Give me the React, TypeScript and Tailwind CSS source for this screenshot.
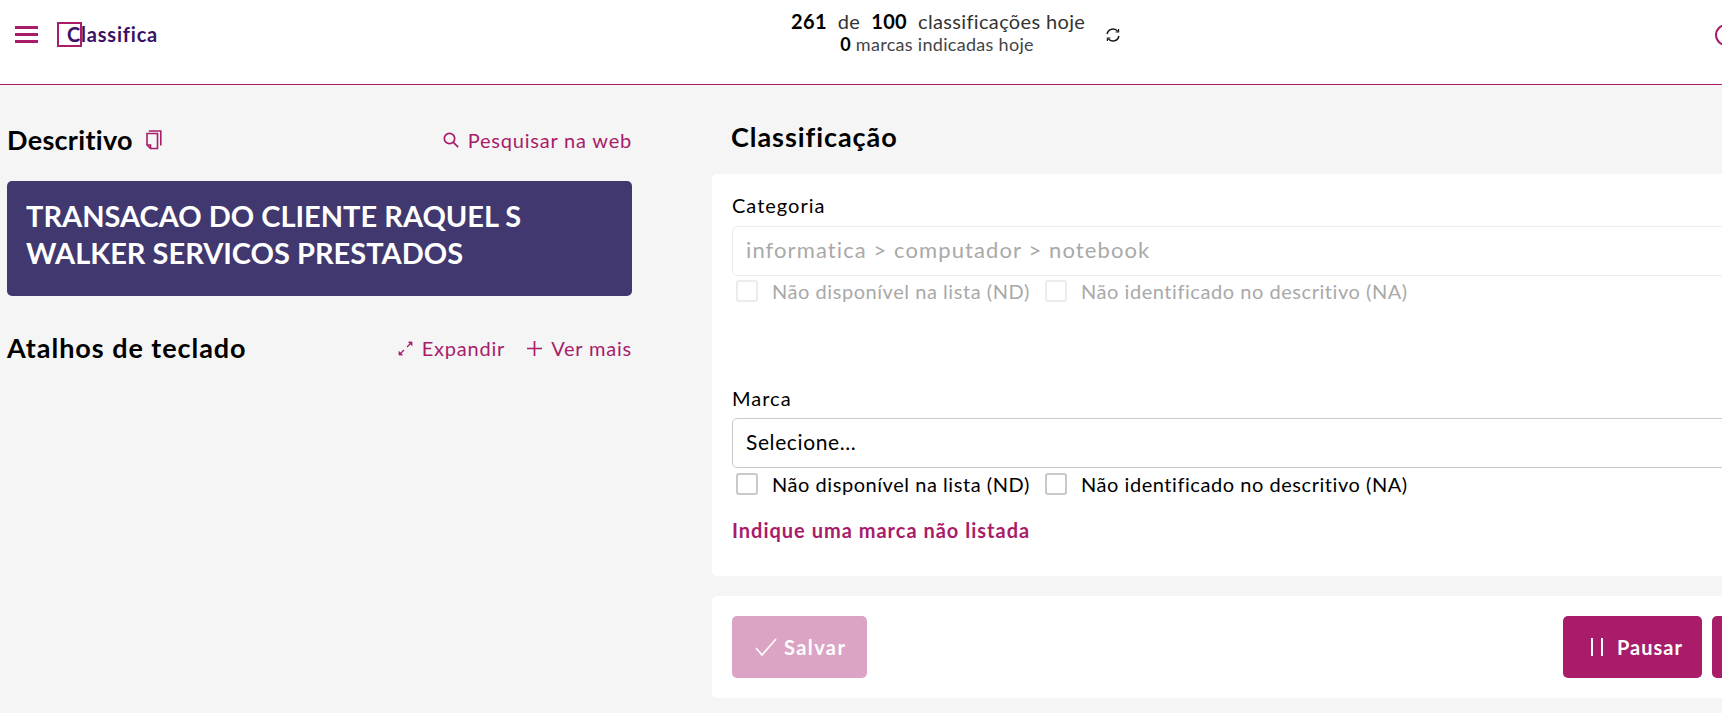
import React from 'react';

const FONT = "font-['Lato','Open_Sans',sans-serif]";

// Caixa de seleção com rótulo
const CheckOption = ({ label, disabled, className }: { label: string; disabled?: boolean; className?: string }) => (
  <label className={`flex items-center gap-[14px] ${className ?? ''}`}>
    <span className={`block w-[22px] h-[22px] rounded-[3px] border-2 bg-white ${disabled ? 'border-[#ececec]' : 'border-[#c9c9c9]'}`} />
    <span className={`text-[20px] tracking-[0.55px] leading-[22px] whitespace-nowrap ${disabled ? 'text-[#a9a9a9]' : 'text-black'}`}>{label}</span>
  </label>
);

const SectionLink = ({ icon, label }: { icon: React.ReactNode; label: string }) => (
  <a href="#" className="flex items-center gap-[9px] text-[20px] tracking-[0.8px] leading-6 text-[#a81c6a]">
    {icon}
    <span>{label}</span>
  </a>
);

const CopyIcon = () => (
  <svg width="16" height="20" viewBox="0 0 16 20" fill="none" stroke="#a81c6a" strokeWidth="1.6">
    <path d="M2.800 1h12v14.500" />
    <path d="M1 3.500h10.500V18.500H4.500L1 15z" />
    <path d="M1 15h3.500v3.500" />
  </svg>
);

const SearchIcon = () => (
  <svg width="16" height="16" viewBox="0 0 16 16" fill="none" stroke="#a81c6a" strokeWidth="1.7">
    <circle cx="6.500" cy="6.500" r="5.200" />
    <path d="M10.300 10.300L15.200 15.200" />
  </svg>
);

const ExpandIcon = () => (
  <svg width="15" height="15" viewBox="0 0 15 15" fill="#a81c6a" stroke="#a81c6a" strokeWidth="0.800">
    <path d="M1 14v-3.500l3.500 3.500z" />
    <path d="M14 1v3.500L10.500 1z" />
    <path d="M2.500 12.500L6 9M12.500 2.500L9 6" fill="none" strokeWidth="1.300" />
  </svg>
);

const PlusIcon = () => (
  <svg width="15" height="15" viewBox="0 0 15 15" fill="none" stroke="#a81c6a" strokeWidth="1.700">
    <path d="M7.500 0v15M0 7.500h15" />
  </svg>
);

const RefreshIcon = () => (
  <svg width="16" height="16" viewBox="0 0 16 16" fill="none" stroke="#1a1a1a" strokeWidth="1.500" className="shrink-0">
    <path d="M2.100 7A6 6 0 0 1 12.800 4.400" />
    <path d="M13.900 9A6 6 0 0 1 3.200 11.600" />
    <path d="M13.600 2v3h-3" strokeWidth="1.200" />
    <path d="M2.400 14v-3h3" strokeWidth="1.200" />
  </svg>
);

export default function App() {
  return (
    <div className={`w-[1722px] h-[713px] overflow-hidden bg-[#f5f5f5] ${FONT}`}>
      <div className="w-[1880px]">
        <header className="h-[85px] flex items-start bg-white border-b border-[#a81c6a]">
          <div className="w-[791px] flex items-center pl-[15px] pt-[22px] shrink-0">
            <div className="w-[23px] flex flex-col gap-[4.500px]">
              <span className="block h-[2.500px] bg-[#a81c6a]" />
              <span className="block h-[2.500px] bg-[#a81c6a]" />
              <span className="block h-[2.500px] bg-[#a81c6a]" />
            </div>
            <div className="relative ml-[19px] h-[25px] w-[100px] pl-[10px]">
              <span className="absolute left-0 top-0 w-[25px] h-[25px] border-2 border-[#a81c6a]" />
              <span className="block text-[20px] leading-[25px] font-bold text-[#3b1166] tracking-[0.8px]">Classifica</span>
            </div>
          </div>
          <div className="w-[292px] shrink-0 pt-[9px] text-center">
            <p className="text-[20px] tracking-[0.35px] leading-6 text-[#333] whitespace-nowrap">
              <b className="font-bold text-black">261</b>&nbsp; de &nbsp;<b className="font-bold text-black">100</b>&nbsp; classificações hoje
            </p>
            <p className="text-[18px] tracking-[0.3px] leading-[22px] text-[#444] whitespace-nowrap">
              <b className="font-bold text-black">0</b> marcas indicadas hoje
            </p>
          </div>
          <div className="ml-[22px] mt-[27px]">
            <RefreshIcon />
          </div>
          <div className="ml-[594px] mt-[24px] w-[22px] h-[22px] rounded-full border-2 border-[#a81c6a] shrink-0" />
        </header>

        <main className="flex items-start pl-[7px] gap-[80px]">
          <section className="w-[625px] shrink-0">
            <div className="flex items-center justify-between h-[24px] mt-[43px]">
              <div className="flex items-center gap-[13px]">
                <h2 className="text-[27px] tracking-[0.3px] leading-6 font-bold text-black">Descritivo</h2>
                <CopyIcon />
              </div>
              <SectionLink icon={<SearchIcon />} label="Pesquisar na web" />
            </div>
            <div className="mt-[29px] h-[115px] rounded-[5px] bg-[#40386f] px-[19px] pt-[16px]">
              <p className="text-[29px] leading-[37px] font-bold text-white">TRANSACAO DO CLIENTE RAQUEL S<br />WALKER SERVICOS PRESTADOS</p>
            </div>
            <div className="flex items-center justify-between mt-[40px]">
              <h2 className="text-[27px] tracking-[0.95px] leading-6 font-bold text-black">Atalhos de teclado</h2>
              <div className="flex items-center gap-[22px]">
                <SectionLink icon={<ExpandIcon />} label="Expandir" />
                <SectionLink icon={<PlusIcon />} label="Ver mais" />
              </div>
            </div>
          </section>

          <section className="w-[1159px] shrink-0">
            <h2 className="pl-[19px] mt-[40px] text-[27px] tracking-[0.95px] leading-6 font-bold text-black">Classificação</h2>
            <div className="mt-[25px] h-[402px] rounded-[5px] bg-white px-[20px] pt-[19px]">
              <p className="text-[20px] tracking-[1px] leading-6 text-black">Categoria</p>
              <div className="mt-[9px] h-[50px] flex items-center px-[13px] pb-[3px] rounded-[5px] border border-[#ececec] text-[22px] tracking-[1.1px] text-[#a9a9a9]">
                informatica &gt; computador &gt; notebook
              </div>
              <div className="flex items-center mt-[4px] pl-[4px]">
                <CheckOption disabled label="Não disponível na lista (ND)" className="w-[309px]" />
                <CheckOption disabled label="Não identificado no descritivo (NA)" />
              </div>
              <p className="mt-[84px] text-[20px] tracking-[1px] leading-6 text-black">Marca</p>
              <div className="mt-[8px] h-[50px] flex items-center px-[13px] pb-[3px] rounded-[5px] border border-[#c9c9c9] text-[21px] tracking-[0.6px] text-black">
                Selecione...
              </div>
              <div className="flex items-center mt-[5px] pl-[4px]">
                <CheckOption label="Não disponível na lista (ND)" className="w-[309px]" />
                <CheckOption label="Não identificado no descritivo (NA)" />
              </div>
              <a href="#" className="block mt-[23px] text-[20px] tracking-[1px] leading-6 font-bold text-[#a81c6a]">Indique uma marca não listada</a>
            </div>
            <div className="mt-[20px] h-[102px] rounded-[5px] bg-white px-[20px] flex items-center justify-between">
              <button className="w-[135px] h-[62px] rounded-[5px] bg-[#dba4c4] flex items-center pl-[23px] gap-[7px] text-white text-[20px] tracking-[1.4px] font-bold">
                <svg width="22" height="18" viewBox="0 0 22 18" fill="none" stroke="white" strokeWidth="1.600"><path d="M1 10l6 7L21 1" /></svg>
                Salvar
              </button>
              <div className="flex gap-[10px]">
                <button className="w-[139px] h-[62px] rounded-[5px] bg-[#a81c6a] flex items-center pl-[28px] text-white text-[20px] tracking-[1px] font-bold">
                  <span className="flex gap-[8px] mr-[14px]">
                    <span className="block w-[2px] h-[18px] bg-white" />
                    <span className="block w-[2px] h-[18px] bg-white" />
                  </span>
                  Pausar
                </button>
                <button className="w-[139px] h-[62px] rounded-[5px] bg-[#a81c6a]" />
              </div>
            </div>
          </section>
        </main>
      </div>
    </div>
  );
}
